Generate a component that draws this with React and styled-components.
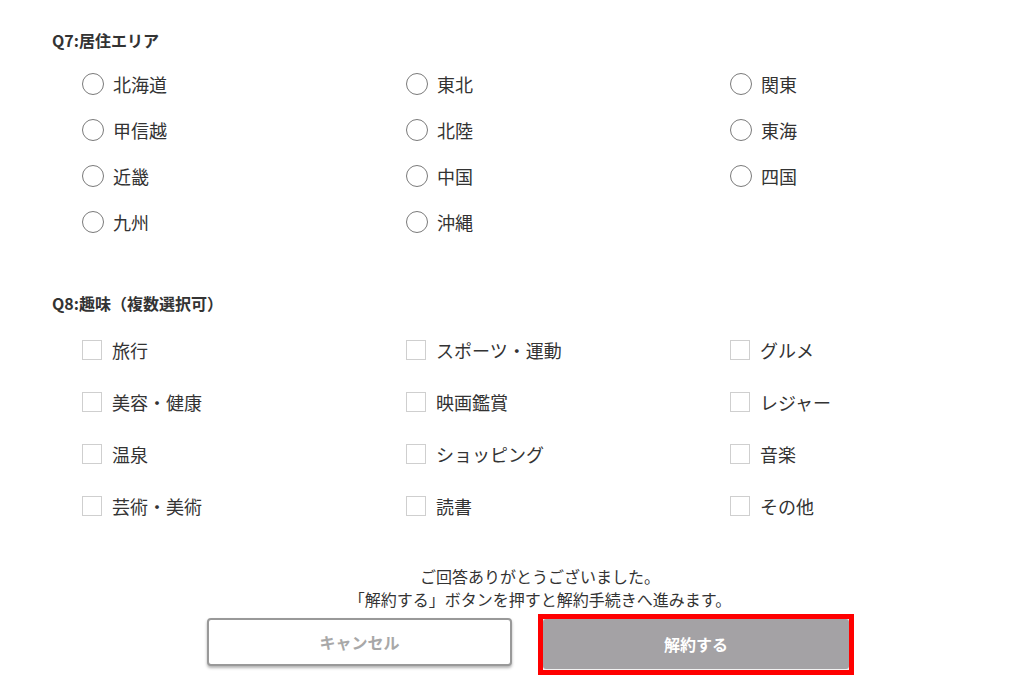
import React from 'react'
import styled, { createGlobalStyle } from 'styled-components'

const GlobalStyle = createGlobalStyle`
  body {
    margin: 0;
    background: #fff;
    overflow-x: hidden;
    font-family: "Noto Sans CJK JP", "Noto Sans", sans-serif;
    color: #333;
  }
`

const Page = styled.div`
  width: 976px;
  padding: 29px 0 20px 52px;
`

const Heading = styled.h2`
  margin: 0;
  font-size: 16px;
  line-height: 22px;
  font-weight: 700;
  color: #333;
`

const Options = styled.div`
  display: grid;
  grid-template-columns: 324px 324px 1fr;
  grid-auto-rows: ${(p) => p.$row}px;
  padding-left: 30px;
  margin: ${(p) => p.$top}px 0 ${(p) => p.$bottom}px;
`

const Option = styled.label`
  display: flex;
  align-items: center;
  gap: ${(p) => (p.$square ? 10 : 9)}px;
  font-size: 18px;
  color: #333;
`

const Radio = styled.span`
  width: 22px;
  height: 22px;
  box-sizing: border-box;
  border: 1px solid #7a7a7a;
  border-radius: 50%;
  flex: none;
`

const Check = styled.span`
  width: 20px;
  height: 20px;
  box-sizing: border-box;
  border: 1.5px solid #cfcfcf;
  flex: none;
`

const Message = styled.p`
  margin: 33px 0 0;
  font-size: 16px;
  line-height: 23px;
  text-align: center;
  color: #333;
`

const Buttons = styled.div`
  display: flex;
  align-items: flex-start;
  gap: 26px;
  padding-left: 155px;
  margin-top: 7px;
`

const Button = styled.button`
  width: 305px;
  box-sizing: border-box;
  border-radius: 4px;
  font-family: inherit;
  font-size: 16px;
  font-weight: 700;
  cursor: pointer;
`

const Cancel = styled(Button)`
  height: 48px;
  background: #fff;
  color: #a8a8a8;
  border: 2px solid #999;
  box-shadow: 0 2px 3px rgba(0, 0, 0, 0.3);
`

const Highlight = styled.div`
  margin-top: -4px;
  border: 5px solid #ff0000;
  padding-bottom: 1px;
  background: #f2f2f2;
  display: flex;
`

const Submit = styled(Button)`
  height: 50px;
  width: 306px;
  background: #a4a2a5;
  color: #fff;
  border: none;
  border-radius: 3px;
`

const areas = ['北海道', '東北', '関東', '甲信越', '北陸', '東海', '近畿', '中国', '四国', '九州', '沖縄']
const hobbies = [
  '旅行', 'スポーツ・運動', 'グルメ',
  '美容・健康', '映画鑑賞', 'レジャー',
  '温泉', 'ショッピング', '音楽',
  '芸術・美術', '読書', 'その他',
]

const App = () => {
  return (
    <Page>
      <GlobalStyle />
      <Heading>Q7:居住エリア</Heading>
      <Options $row={46} $top={10} $bottom={47}>
        {areas.map((a) => (
          <Option key={a}>
            <Radio />
            {a}
          </Option>
        ))}
      </Options>
      <Heading>Q8:趣味（複数選択可）</Heading>
      <Options $row={52} $top={10} $bottom={0}>
        {hobbies.map((h) => (
          <Option key={h} $square>
            <Check />
            {h}
          </Option>
        ))}
      </Options>
      <Message>
        ご回答ありがとうございました。<br />
        「解約する」ボタンを押すと解約手続きへ進みます。
      </Message>
      <Buttons>
        <Cancel>キャンセル</Cancel>
        <Highlight>
          <Submit>解約する</Submit>
        </Highlight>
      </Buttons>
    </Page>
  )
}

export default App
